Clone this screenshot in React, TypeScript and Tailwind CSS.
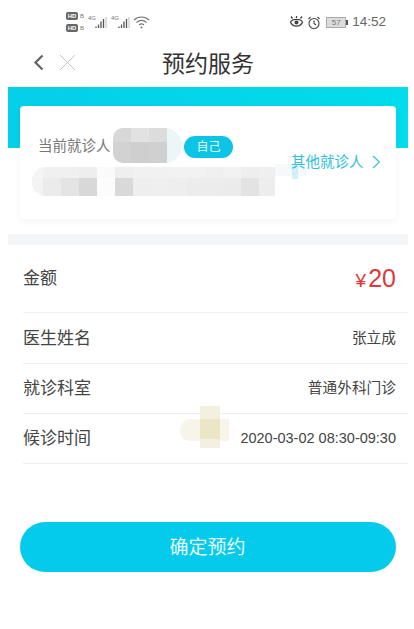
const font = "[font-family:'Liberation_Sans','Noto_Sans_CJK_SC',sans-serif]";

function Signal() {
  return (
    <div className="relative w-[20px] h-[16px]">
      <span className="absolute left-0 top-0 text-[6px] leading-[8px] text-[#777]">4G</span>
      <svg width="20" height="16" viewBox="0 0 20 16" className="absolute inset-0">
        <path d="M8 12.500v1.500M10.500 10.500v3.500M13 7.500v6.500M15.500 5v9" stroke="#555" strokeWidth="1.300" fill="none" />
        <path d="M18 3v11" stroke="#bbb" strokeWidth="1" fill="none" />
      </svg>
    </div>
  );
}

function Hd() {
  return (
    <div className="flex items-center gap-[2px]">
      <span className="w-[12px] h-[8px] rounded-[2px] bg-[#666] text-white text-[6px] leading-[8px] text-center font-bold">HD</span>
      <span className="text-[6px] leading-[8px] text-[#777]">B</span>
    </div>
  );
}

function StatusBar() {
  return (
    <div className="h-[44px] flex items-center justify-between pl-[66px] pr-[28px]">
      <div className="flex items-center gap-[3px]">
        <div className="flex flex-col gap-[4px] mr-[1px]">
          <Hd />
          <Hd />
        </div>
        <Signal />
        <Signal />
        <svg width="17" height="15" viewBox="0 0 17 15" fill="none" stroke="#777" strokeWidth="1.100" className="-ml-[1px]">
          <path d="M1 5c4-4 11-4 15 0M3.500 7.500c3-2.600 7-2.600 10 0M6 10c1.500-1.300 3.500-1.300 5 0" />
          <circle cx="8.500" cy="12.500" r="1" fill="#777" stroke="none" />
        </svg>
      </div>
      <div className="flex items-center text-[#666]">
        <svg width="15" height="14" viewBox="0 0 15 14" fill="none" stroke="#444" strokeWidth="1.300" className="mr-[3px]">
          <path d="M1.500 7C3.500 3.500 11.500 3.500 13.500 7 11.500 12.500 3.500 12.500 1.500 7Z" />
          <circle cx="7.500" cy="7.500" r="2" fill="#444" stroke="none" />
          <path d="M3.500 3.500 2 1.500M7.500 3V1M11.500 3.500l1.500-2" />
        </svg>
        <svg width="14" height="15" viewBox="0 0 14 15" fill="none" stroke="#444" strokeWidth="1.100" className="mr-[5px]">
          <circle cx="7" cy="8.500" r="5" />
          <path d="M7 5.500v3l2 1.500M1.500 4 3.500 2M12.500 4l-2-2" />
        </svg>
        <div className="w-[20px] h-[11px] border border-[#aaa] bg-[#dcdcdc] text-[8px] leading-[9px] text-center text-[#777]">57</div>
        <span className="w-[2px] h-[5px] bg-[#555] mr-[4px]" />
        <span className="text-[13.500px] leading-none">14:52</span>
      </div>
    </div>
  );
}

function Header() {
  return (
    <div className="h-[43px] relative flex items-center justify-center">
      <div className="absolute left-[33px] top-[10px] flex items-center gap-[15px]">
        <svg width="11" height="17" viewBox="0 0 11 17" fill="none" stroke="#666" strokeWidth="2.300">
          <path d="M9.500 1.500 2.500 8.500l7 7" />
        </svg>
        <svg width="17" height="17" viewBox="0 0 17 17" fill="none" stroke="#c4c4c4" strokeWidth="1">
          <path d="M1 1l15 15M16 1 1 16" />
        </svg>
      </div>
      <span className="text-[23px] leading-none text-[#333] pl-[2px] pb-[3px]">预约服务</span>
    </div>
  );
}

function Pixels({ cells, size }: { cells: string[]; size: string }) {
  return (
    <div className={`grid ${size}`}>
      {cells.map((c, i) => (
        <div key={i} className={c} />
      ))}
    </div>
  );
}

function PatientCard() {
  return (
    <div className="relative mx-[12px] -mt-[42px] h-[113px] bg-white rounded-[4px] shadow-[0_2px_8px_rgba(0,0,0,0.05)]">
      <div className="absolute left-[18px] top-[32px] text-[14.500px] leading-[16px] text-[#777]">当前就诊人</div>
      {/* redacted name */}
      <div className="absolute left-[93px] top-[22px] w-[69px] h-[35px] rounded-r-[17px] rounded-l-[10px] overflow-hidden bg-[#eaf6f8]">
        <Pixels
          size="grid-cols-[18px_18px_18px] grid-rows-[14px_21px]"
          cells={["bg-[#d8d8d8]", "bg-[#e2e2e2]", "bg-[#dcdcdc]", "bg-[#d2d2d2]", "bg-[#cfcfcf]", "bg-[#d0d0d0]"]}
        />
      </div>
      <div className="absolute left-[164px] top-[30px] w-[49px] h-[22px] rounded-full bg-[#0cc4e6] text-[#e8fbff] text-[12px] leading-[22px] text-center">自己</div>
      {/* redacted id */}
      <div className="absolute left-[12px] top-[61px] w-[243px] h-[29px] rounded-l-[14px] overflow-hidden bg-[#f4f4f4]">
        <Pixels
          size="grid-cols-[11px_18px_18px_18px_18px_18px_18px_18px_18px_18px_18px_18px_18px_18px] grid-rows-[11px_18px]"
          cells={[
            "bg-[#f5f5f5]", "bg-[#f0f0f0]", "bg-[#f0f0f0]", "bg-[#eeeeee]", "bg-[#fafafa]", "bg-[#efefef]", "bg-[#f1f1f1]", "bg-[#f1f1f1]", "bg-[#f2f2f2]", "bg-[#f2f2f2]", "bg-[#f0f0f0]", "bg-[#f2f2f2]", "bg-[#eeeeee]", "bg-[#efefef]",
            "bg-[#f3f3f3]", "bg-[#ebebeb]", "bg-[#e4e4e4]", "bg-[#d8d8d8]", "bg-[#fcfcfc]", "bg-[#d9d9d9]", "bg-[#eeeeee]", "bg-[#efefef]", "bg-[#eeeeee]", "bg-[#ececec]", "bg-[#ececec]", "bg-[#ebebeb]", "bg-[#e3e3e3]", "bg-[#ededed]",
          ]}
        />
      </div>
      <div className="absolute left-[255px] top-[58px] w-[32px] h-[12px] rounded-tr-[10px] bg-[#f6f9fa]" />
      <div className="absolute left-[272px] top-[60px] w-[6px] h-[13px] bg-[#d3eff6]" />
      <div className="absolute left-[271px] top-[48px] flex items-center text-[14.500px] leading-[16px] text-[#2fbfd8]">
        <span>其他就诊人</span>
        <svg width="9" height="14" viewBox="0 0 9 14" fill="none" stroke="#2fbfd8" strokeWidth="1.100" className="ml-[8px]">
          <path d="M1 1l6.500 6L1 13" />
        </svg>
      </div>
    </div>
  );
}

function Row({ label, value, h, size }: { label: string; value: string; h: string; size: string }) {
  return (
    <div className={`${h} flex items-center justify-between border-b border-[#eeeeee] pr-[12px] text-[#444]`}>
      <span className="text-[17px] leading-none">{label}</span>
      <span className={`${size} leading-none`}>{value}</span>
    </div>
  );
}

export default function App() {
  return (
    <div className={`relative w-[414px] h-[629px] overflow-hidden bg-white ${font}`}>
      <StatusBar />
      <Header />
      <div className="pl-[8px] pr-[6px]">
        <div className="h-[61px] bg-gradient-to-r from-[#05cfe9] to-[#02dceb]" />
        <PatientCard />
        <div className="h-[11px] mt-[15px] bg-[#f4f5f7]" />
        <div className="ml-[15px]">
          <div className="h-[68px] flex items-center justify-between border-b border-[#f1f1f1] pr-[12px] text-[#444]">
            <span className="text-[17px] leading-none">金额</span>
            <span className="flex items-baseline text-[#dc3a3a]">
              <span className="text-[19px] leading-none mr-[2px]">¥</span>
              <span className="text-[25px] leading-none">20</span>
            </span>
          </div>
          <Row label="医生姓名" value="张立成" h="h-[51px]" size="text-[14.700px]" />
          <Row label="就诊科室" value="普通外科门诊" h="h-[50px]" size="text-[14.700px]" />
          <Row label="候诊时间" value="2020-03-02 08:30-09:30" h="h-[50px]" size="text-[14.500px]" />
        </div>
        <div className="mx-[12px] mt-[58px] h-[50px] rounded-full bg-[#04cbeb] text-[#eafcff] text-[19px] leading-[51px] text-center pr-[1px]">确定预约</div>
      </div>
      {/* stain over the content */}
      <div className="absolute left-[180px] top-[419px] w-[49px] h-[22px] rounded-l-[10px] bg-[#f7f4e9]" />
      <div className="absolute left-[200px] top-[406px] w-[20px] h-[42px] bg-[#f3f0e0]" />
      <div className="absolute left-[200px] top-[419px] w-[20px] h-[20px] bg-[#ece5c6]" />
    </div>
  );
}
